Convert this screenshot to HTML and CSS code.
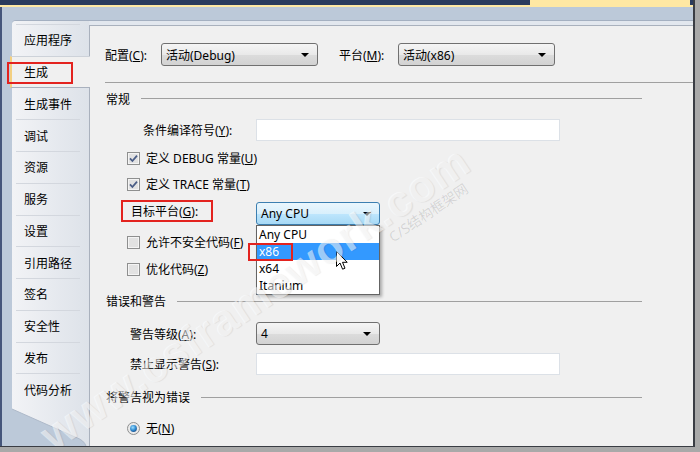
FILE: index.html
```html
<!DOCTYPE html>
<html lang="zh-CN">
<head>
<meta charset="utf-8">
<title>生成</title>
<link rel="stylesheet" href="styles.css">
</head>
<body>
<div class="window">
  <div class="titlebar"><div class="doc-tab"></div></div>
  <div class="accent"></div>
  <div class="frame">
    <div class="page">
      <nav class="sidebar">
        <div class="tab">应用程序</div>
        <div class="tab selected">生成<span class="mark mark-tab"></span></div>
        <div class="tab">生成事件</div>
        <div class="tab">调试</div>
        <div class="tab">资源</div>
        <div class="tab">服务</div>
        <div class="tab">设置</div>
        <div class="tab">引用路径</div>
        <div class="tab">签名</div>
        <div class="tab">安全性</div>
        <div class="tab">发布</div>
        <div class="tab">代码分析</div>
        <div class="fold">
          <svg viewBox="0 0 77 41" preserveAspectRatio="none" width="77" height="41">
            <path d="M0 4 L63 32 Q72 35 74 41 L0 41 Z" fill="#bcc9d9"/>
            <path d="M0 4 L63 32 Q72 35 74 41" fill="none" stroke="#aeb9c9" stroke-width="1"/>
          </svg>
        </div>
      </nav>
      <main class="content">
        <div class="row r-config">
          <span class="lbl lbl-config">配置(<u>C</u>):</span>
          <div class="combo w157"><span>活动(Debug)</span><i class="arrow"></i></div>
          <span class="lbl lbl-platform">平台(<u>M</u>):</span>
          <div class="combo w157"><span>活动(x86)</span><i class="arrow"></i></div>
        </div>
        <div class="rule"></div>

        <div class="group g-general">常规</div>
        <div class="row r-define">
          <span class="lbl lbl-define">条件编译符号(<u>Y</u>):</span>
          <div class="textbox"></div>
        </div>
        <div class="row check r-debug">
          <svg class="box" width="13" height="13" viewBox="0 0 13 13"><rect x="0.5" y="0.5" width="12" height="12" fill="#f4f4f4" stroke="#8e8f8f"/><rect x="2" y="2" width="9" height="9" fill="#e2e2e2"/><path d="M3 6.4 L5.4 9 L10 3.6" fill="none" stroke="#4a5d86" stroke-width="1.8"/></svg>
          <span>定义 DEBUG 常量(<u>U</u>)</span>
        </div>
        <div class="row check r-trace">
          <svg class="box" width="13" height="13" viewBox="0 0 13 13"><rect x="0.5" y="0.5" width="12" height="12" fill="#f4f4f4" stroke="#8e8f8f"/><rect x="2" y="2" width="9" height="9" fill="#e2e2e2"/><path d="M3 6.4 L5.4 9 L10 3.6" fill="none" stroke="#4a5d86" stroke-width="1.8"/></svg>
          <span>定义 TRACE 常量(<u>T</u>)</span>
        </div>
        <div class="row r-target">
          <span class="lbl lbl-target">目标平台(<u>G</u>):</span>
          <div class="combo combo-focus w124">
            <span>Any CPU</span><i class="arrow"></i>
            <ul class="droplist">
              <li>Any CPU</li>
              <li class="hl">x86<span class="mark mark-x86"></span></li>
              <li>x64</li>
              <li>Itanium</li>
              <svg class="cursor" width="13" height="20" viewBox="0 0 13 20"><path d="M0.5 0.5 L0.5 15.5 L4 12 L6.6 18.2 L9 17.2 L6.5 11.3 L11.2 11.3 Z" fill="#fff" stroke="#000" stroke-width="1" stroke-linejoin="round"/></svg>
            </ul>
          </div>
        </div>
        <div class="row check r-unsafe">
          <svg class="box" width="13" height="13" viewBox="0 0 13 13"><rect x="0.5" y="0.5" width="12" height="12" fill="#f4f4f4" stroke="#8e8f8f"/><rect x="2" y="2" width="9" height="9" fill="#e2e2e2"/></svg>
          <span>允许不安全代码(<u>F</u>)</span>
        </div>
        <div class="row check r-opt">
          <svg class="box" width="13" height="13" viewBox="0 0 13 13"><rect x="0.5" y="0.5" width="12" height="12" fill="#f4f4f4" stroke="#8e8f8f"/><rect x="2" y="2" width="9" height="9" fill="#e2e2e2"/></svg>
          <span>优化代码(<u>Z</u>)</span>
        </div>

        <div class="group g-errors">错误和警告</div>
        <div class="row r-level">
          <span class="lbl lbl-level">警告等级(<u>A</u>):</span>
          <div class="combo w124"><span>4</span><i class="arrow"></i></div>
        </div>
        <div class="row r-suppress">
          <span class="lbl lbl-level">禁止显示警告(<u>S</u>):</span>
          <div class="textbox"></div>
        </div>

        <div class="group g-treat">将警告视为错误</div>
        <div class="row check r-none">
          <svg class="box" width="13" height="13" viewBox="0 0 13 13">
            <defs><radialGradient id="dot" cx="0.4" cy="0.35" r="0.7"><stop offset="0" stop-color="#9fe0ff"/><stop offset="0.6" stop-color="#2f8ad0"/><stop offset="1" stop-color="#1a4f8a"/></radialGradient></defs>
            <circle cx="6.5" cy="6.5" r="6" fill="#eaeaea" stroke="#8e8f8f"/>
            <circle cx="6.5" cy="6.5" r="3.4" fill="url(#dot)"/>
          </svg>
          <span>无(<u>N</u>)</span>
        </div>
      </main>
    </div>
  </div>
  <div class="watermark">www.csframework.com</div>
  <div class="watermark-cn">C/S结构框架网</div>
</div>
</body>
</html>
```
FILE: styles.css
```css
html, body {
  margin: 0;
  padding: 0;
}
body {
  width: 700px;
  height: 452px;
  background: #a9a9a9;
  font-family: "Noto Sans", "Noto Sans CJK SC", sans-serif;
  font-size: 12px;
  color: #000;
  overflow: hidden;
}
.window {
  position: relative;
  width: 695px;
  height: 447px;
  box-sizing: border-box;
  border-right: 2px solid #3a3d44;
  border-bottom: 1px solid #3a3d44;
  display: flex;
  flex-direction: column;
  overflow: hidden;
}
.titlebar {
  height: 5px;
  background: #2a3b5d;
  display: flex;
  justify-content: flex-end;
}
.doc-tab {
  width: 160px;
  height: 5px;
  margin-right: 3px;
  background: #ffe8a3;
}
.accent {
  height: 2px;
  background: #ffe8a3;
}
.frame {
  flex: 1;
  display: flex;
  flex-direction: column;
  border-left: 2px solid #45557a;
  background: #bcc9d9;
  padding-top: 13px;
  min-height: 0;
}
.page {
  flex: 1;
  margin-left: 10px;
  display: flex;
  border-top: 1px solid #a4b0c1;
  background: #e2e7ee;
  border-top-left-radius: 4px;
  min-height: 0;
}
.sidebar {
  width: 77px;
  flex: none;
  display: flex;
  flex-direction: column;
  padding-top: 3px;
  box-sizing: border-box;
  background: linear-gradient(to right, #f2f3f6, #dde2e9);
  border-top-left-radius: 4px;
  position: relative;
  z-index: 2;
}
.tab {
  height: 31.75px;
  flex: none;
  box-sizing: border-box;
  margin: 0 9px 0 4px;
  padding-left: 8px;
  display: flex;
  align-items: center;
  border-top: 1px solid #d3d7de;
}
.tab.selected {
  margin: 0 -1px 0 -2px;
  padding-left: 12px;
  background: #f0f0f0;
  border-top: 1px solid #cdd2d9;
  border-bottom: 1px solid #a9b1be;
  border-left: 2px solid #f3cf80;
  position: relative;
}
.tab.selected + .tab {
  border-top-color: transparent;
}
.fold {
  flex: 1;
  display: flex;
}
.fold svg {
  width: 77px;
  height: 100%;
  display: block;
}
.mark {
  position: absolute;
  border: 2px solid #e3231f;
  box-sizing: border-box;
}
.mark-tab {
  left: -5px;
  top: 5px;
  width: 66px;
  height: 22px;
}
.content {
  flex: 1;
  margin-top: 4px;
  border-top: 1px solid #a9b1bd;
  border-left: 1px solid #a9b1bd;
  background: #f0f0f0;
  display: flex;
  flex-direction: column;
  position: relative;
  min-width: 0;
}
.row {
  display: flex;
  align-items: center;
  flex: none;
}
.lbl {
  flex: none;
  white-space: nowrap;
}
u {
  text-decoration: underline;
  text-underline-offset: 1px;
}
.r-config { margin-top: 17px; height: 23px; }
.lbl-config { margin-left: 15px; width: 56px; }
.lbl-platform { margin-left: 21px; width: 59px; }
.combo {
  height: 23px;
  box-sizing: border-box;
  border: 1px solid #707070;
  border-radius: 3px;
  background: linear-gradient(#f5f5f5, #e9e9e9 50%, #dcdcdc 51%, #d2d2d2);
  display: flex;
  align-items: center;
  padding-left: 4px;
  position: relative;
  flex: none;
}
.w157 { width: 157px; }
.w124 { width: 124px; }
.combo .arrow {
  margin-left: auto;
  margin-right: 8px;
  width: 0;
  height: 0;
  border-left: 4px solid transparent;
  border-right: 4px solid transparent;
  border-top: 4px solid #000;
}
.combo-focus {
  border-color: #3c7fb1;
  background: linear-gradient(#eaf6fd, #d9f0fc 50%, #bee6fd 51%, #a7d9f5);
}
.rule {
  margin: 16px 0 0 15px;
  height: 1px;
  background: #a0a0a0;
  flex: none;
}
.group {
  display: flex;
  align-items: center;
  height: 16px;
  margin: 8px 51px 0 16px;
  flex: none;
}
.group::after {
  content: "";
  flex: 1;
  height: 1px;
  background: #a0a0a0;
  margin-left: 11px;
}
.g-general::after { margin-bottom: 2px; }
.g-errors { margin-top: 16px; }
.g-treat { margin-top: 14px; }
.r-define { margin-top: 12px; height: 22px; }
.lbl-define { margin-left: 53px; width: 113px; }
.textbox {
  width: 304px;
  height: 22px;
  box-sizing: border-box;
  border: 1px solid #dce1e7;
  background: #fff;
  flex: none;
}
.check {
  height: 16px;
  margin-left: 37px;
}
.check .box {
  flex: none;
  margin-right: 6px;
  display: block;
}
.r-debug { margin-top: 9px; }
.r-trace { margin-top: 10px; }
.r-target { margin-top: 10px; height: 23px; position: relative; z-index: 3; }
.lbl-target {
  margin-left: 31px;
  width: 92px;
  height: 22px;
  box-sizing: border-box;
  border: 2px solid #e3231f;
  padding-left: 8px;
  display: flex;
  align-items: center;
  align-self: flex-start;
  margin-top: -2px;
  margin-right: 43px;
}
.droplist {
  position: absolute;
  left: -1px;
  top: 22px;
  width: 124px;
  margin: 0;
  padding: 0;
  list-style: none;
  background: #fff;
  border: 1px solid #646464;
  box-sizing: border-box;
  box-shadow: 2px 2px 3px rgba(0,0,0,0.3);
}
.droplist li {
  height: 17px;
  line-height: 17px;
  padding-left: 2px;
  position: relative;
}
.droplist li.hl {
  background: #3399ff;
  color: #fff;
}
.mark-x86 {
  left: -9px;
  top: 0;
  width: 45px;
  height: 18px;
}
.cursor {
  position: absolute;
  left: 79px;
  top: 25px;
}
.r-unsafe { margin-top: 9px; }
.r-opt { margin-top: 11px; }
.r-level { margin-top: 13px; height: 23px; }
.lbl-level { margin-left: 40px; width: 126px; }
.r-suppress { margin-top: 8px; height: 22px; }
.r-none { margin-top: 15px; }
.watermark {
  position: absolute;
  left: 255px;
  top: 298px;
  transform: translate(-50%, -50%) rotate(-34deg);
  font-family: "Liberation Sans", sans-serif;
  font-weight: bold;
  font-size: 44px;
  letter-spacing: 1px;
  color: rgba(255,255,255,0.55);
  text-shadow: 1px 1px 1px rgba(0,0,0,0.07);
  white-space: nowrap;
  pointer-events: none;
  z-index: 10;
}
.watermark-cn {
  position: absolute;
  left: 428px;
  top: 212px;
  transform: translate(-50%, -50%) rotate(-34deg);
  font-size: 14px;
  color: rgba(0,0,0,0.12);
  white-space: nowrap;
  pointer-events: none;
  z-index: 10;
}
```
